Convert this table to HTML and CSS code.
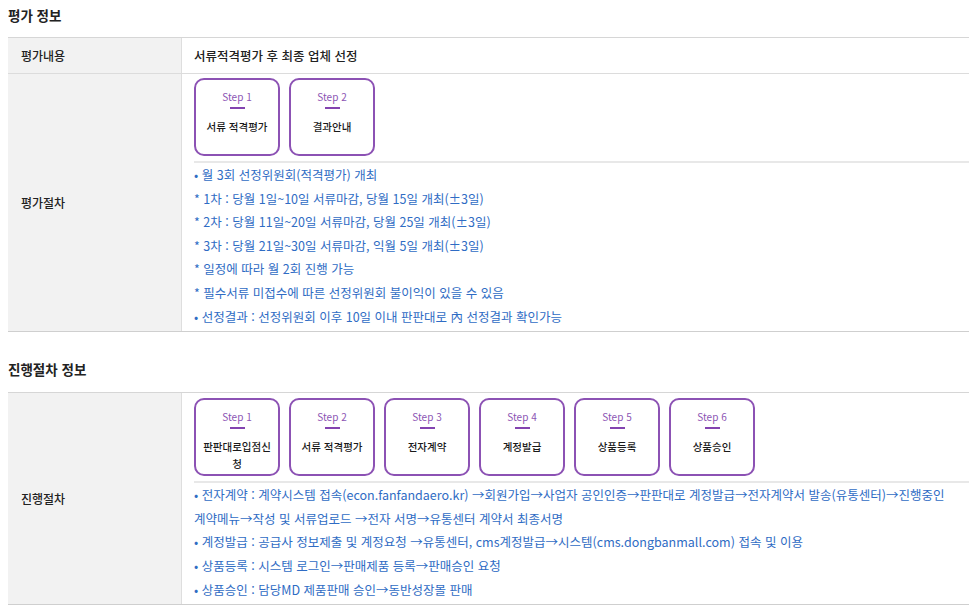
FILE: index.html
```html
<!DOCTYPE html>
<html lang="ko">
<head>
<meta charset="utf-8">
<link rel="stylesheet" href="styles.css">
</head>
<body>
<div class="page">
  <section class="section">
    <h2 class="title">평가 정보</h2>
    <div class="info-table">
      <div class="row">
        <div class="label">평가내용</div>
        <div class="value value-text">서류적격평가 후 최종 업체 선정</div>
      </div>
      <div class="row">
        <div class="label">평가절차</div>
        <div class="value">
          <div class="steps">
            <div class="step"><span class="step-no">Step 1</span><span class="bar"></span><span class="step-name">서류 적격평가</span></div>
            <div class="step"><span class="step-no">Step 2</span><span class="bar"></span><span class="step-name">결과안내</span></div>
          </div>
          <div class="notes">
            <div class="note">• 월 3회 선정위원회(적격평가) 개최</div>
            <div class="note">* 1차 : 당월 1일~10일 서류마감, 당월 15일 개최(±3일)</div>
            <div class="note">* 2차 : 당월 11일~20일 서류마감, 당월 25일 개최(±3일)</div>
            <div class="note">* 3차 : 당월 21일~30일 서류마감, 익월 5일 개최(±3일)</div>
            <div class="note">* 일정에 따라 월 2회 진행 가능</div>
            <div class="note">* 필수서류 미접수에 따른 선정위원회 불이익이 있을 수 있음</div>
            <div class="note">• 선정결과 : 선정위원회 이후 10일 이내 판판대로 內 선정결과 확인가능</div>
          </div>
        </div>
      </div>
    </div>
  </section>

  <section class="section section-second">
    <h2 class="title">진행절차 정보</h2>
    <div class="info-table">
      <div class="row">
        <div class="label">진행절차</div>
        <div class="value">
          <div class="steps steps-second">
            <div class="step"><span class="step-no">Step 1</span><span class="bar"></span><span class="step-name">판판대로입점신청</span></div>
            <div class="step"><span class="step-no">Step 2</span><span class="bar"></span><span class="step-name">서류 적격평가</span></div>
            <div class="step"><span class="step-no">Step 3</span><span class="bar"></span><span class="step-name">전자계약</span></div>
            <div class="step"><span class="step-no">Step 4</span><span class="bar"></span><span class="step-name">계정발급</span></div>
            <div class="step"><span class="step-no">Step 5</span><span class="bar"></span><span class="step-name">상품등록</span></div>
            <div class="step"><span class="step-no">Step 6</span><span class="bar"></span><span class="step-name">상품승인</span></div>
          </div>
          <div class="notes">
            <div class="note">• 전자계약 : 계약시스템 접속(econ.fanfandaero.kr) →회원가입→사업자 공인인증→판판대로 계정발급→전자계약서 발송(유통센터)→진행중인 계약메뉴→작성 및 서류업로드 →전자 서명→유통센터 계약서 최종서명</div>
            <div class="note">• 계정발급 : 공급사 정보제출 및 계정요청 →유통센터, cms계정발급→시스템(cms.dongbanmall.com) 접속 및 이용</div>
            <div class="note">• 상품등록 : 시스템 로그인→판매제품 등록→판매승인 요청</div>
            <div class="note">• 상품승인 : 담당MD 제품판매 승인→동반성장몰 판매</div>
          </div>
        </div>
      </div>
    </div>
  </section>
</div>
</body>
</html>
```

FILE: styles.css
```css
* { box-sizing: border-box; }
html, body { margin: 0; padding: 0; background: #fff; }
body {
  font-family: "Noto Sans CJK KR", "Noto Sans", sans-serif;
  font-size: 12.5px;
  color: #222;
}
.page { padding: 5px 5px 0 8px; width: 974px; }
.title {
  margin: 0 0 12px;
  font-size: 13.5px;
  line-height: 20px;
  font-weight: 700;
  color: #222;
}
.section-second { margin-top: 27px; }
.section-second .title { margin-bottom: 13px; }
.info-table {
  width: 961px;
  border-top: 1px solid #d6d6d6;
  border-bottom: 1px solid #cfcfcf;
}
.row {
  display: grid;
  grid-template-columns: 174px 1fr;
}
.row + .row { border-top: 1px solid #dcdcdc; }
.label {
  background: #f2f2f2;
  border-right: 1px solid #dedede;
  display: flex;
  align-items: center;
  padding-left: 13px;
  font-size: 12px;
  font-weight: 500;
  color: #222;
}
.value { padding-left: 12px; }
.value-text {
  height: 35px;
  display: flex;
  align-items: center;
  font-weight: 500;
}
.steps {
  display: flex;
  gap: 9px;
  padding: 4px 0 5px;
  border-bottom: 2px solid #e8e8e8;
}
.steps-second { padding-top: 5px; }
.step {
  width: 86px;
  height: 78px;
  border: 2px solid #8c52b4;
  border-radius: 10px;
  padding: 9px 4px 0;
  display: flex;
  flex-direction: column;
  align-items: center;
  text-align: center;
}
.step-no {
  font-size: 10px;
  line-height: 16px;
  color: #8c55b4;
}
.bar {
  width: 15px;
  height: 2px;
  background: #8344b0;
  margin-top: 2px;
}
.step-name {
  margin-top: 9px;
  font-size: 10.5px;
  line-height: 17px;
  font-weight: 500;
  color: #1a1a1a;
  word-break: break-all;
}
.notes { padding: 0 0 3px; word-break: keep-all; }
.note {
  line-height: 23.6px;
  color: #2f6cc4;
}
```
